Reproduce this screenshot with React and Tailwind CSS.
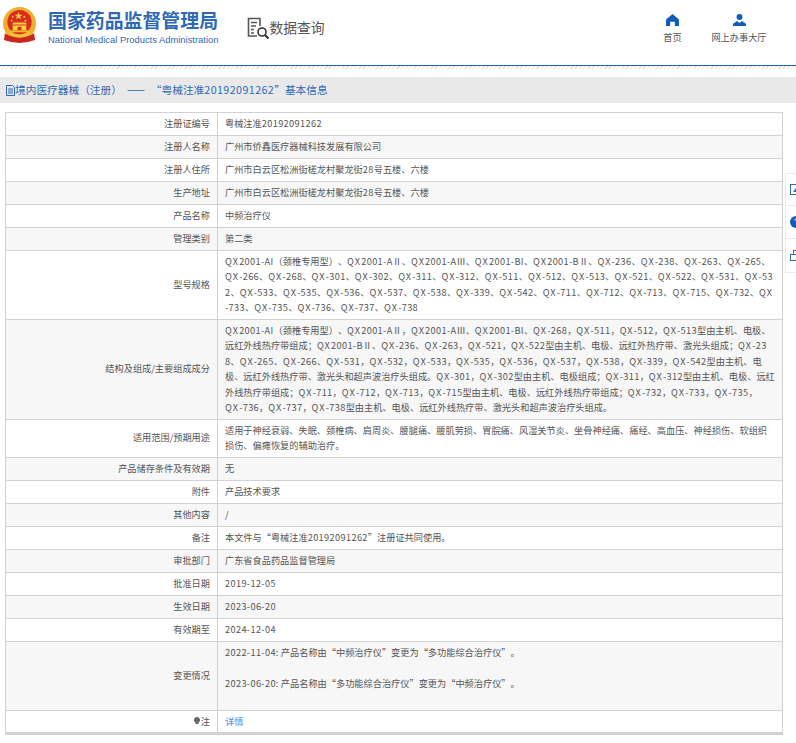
const rows = [
  ['注册证编号', '粤械注准20192091262'],
  ['注册人名称', '广州市侨鑫医疗器械科技发展有限公司'],
  ['注册人住所', '广州市白云区松洲街槎龙村聚龙街28号五楼、六楼'],
  ['生产地址', '广州市白云区松洲街槎龙村聚龙街28号五楼、六楼'],
  ['产品名称', '中频治疗仪'],
  ['管理类别', '第二类'],
  ['型号规格', 'QX2001-AI（颈椎专用型）、QX2001-AⅡ、QX2001-AⅢ、QX2001-BI、QX2001-BⅡ、QX-236、QX-238、QX-263、QX-265、QX-266、QX-268、QX-301、QX-302、QX-311、QX-312、QX-511、QX-512、QX-513、QX-521、QX-522、QX-531、QX-532、QX-533、QX-535、QX-536、QX-537、QX-538、QX-339、QX-542、QX-711、QX-712、QX-713、QX-715、QX-732、QX-733、QX-735、QX-736、QX-737、QX-738'],
  ['结构及组成/主要组成成分', 'QX2001-AI（颈椎专用型）、QX2001-AⅡ，QX2001-AⅢ、QX2001-BI、QX-268，QX-511，QX-512，QX-513型由主机、电极、远红外线热疗带组成；QX2001-BⅡ、QX-236、QX-263，QX-521，QX-522型由主机、电极、远红外热疗带、激光头组成；QX-238、QX-265、QX-266、QX-531，QX-532，QX-533，QX-535，QX-536，QX-537，QX-538，QX-339，QX-542型由主机、电极、远红外线热疗带、激光头和超声波治疗头组成。QX-301，QX-302型由主机、电极组成；QX-311，QX-312型由主机、电极、远红外线热疗带组成；QX-711，QX-712，QX-713，QX-715型由主机、电极、远红外线热疗带组成；QX-732，QX-733，QX-735，\nQX-736，QX-737，QX-738型由主机、电极、远红外线热疗带、激光头和超声波治疗头组成。'],
  ['适用范围/预期用途', '适用于神经衰弱、失眠、颈椎病、肩周炎、腰腿痛、腰肌劳损、胃脘痛、风湿关节炎、坐骨神经痛、痛经、高血压、神经损伤、软组织损伤、偏瘫恢复的辅助治疗。'],
  ['产品储存条件及有效期', '无'],
  ['附件', '产品技术要求'],
  ['其他内容', '/'],
  ['备注', '本文件与“粤械注准20192091262”注册证共同使用。'],
  ['审批部门', '广东省食品药品监督管理局'],
  ['批准日期', '2019-12-05'],
  ['生效日期', '2023-06-20'],
  ['有效期至', '2024-12-04'],
]

// latin runs sit wider than the CJK font's own glyphs, the QX prefix most of all
function Txt({ children }) {
  return children.split(/(QX|[\x21-\x7e]+)/).map((part, i) => {
    if (i % 2 === 0) return part
    return <span key={i} className={part === 'QX' ? 'tracking-[.12em]' : 'tracking-[.04em]'}>{part}</span>
  })
}

function Emblem() {
  return (
    <svg viewBox="0 0 36 38" className="w-[35px] h-[37px] shrink-0">
      <circle cx="18" cy="17" r="17" fill="#eeb02c" />
      <circle cx="18" cy="15.5" r="12.5" fill="#dc2a1e" />
      <polygon points="17,5 18,8 21,8 18.6,9.8 19.5,12.6 17,11 14.5,12.6 15.4,9.8 13,8 16,8" fill="#f8d53e" />
      <circle cx="11" cy="10" r="1" fill="#f8d53e" />
      <circle cx="23" cy="10" r="1" fill="#f8d53e" />
      <circle cx="10" cy="14" r="1" fill="#f8d53e" />
      <circle cx="24" cy="14" r="1" fill="#f8d53e" />
      <path d="M12 16h12l2 2H10z" fill="#f8d53e" />
      <rect x="11" y="19" width="14" height="5" fill="#f8d53e" />
      <rect x="16" y="20.5" width="4" height="3.5" fill="#dc2a1e" />
      <rect x="7" y="24" width="22" height="2" fill="#f0b62f" />
      <path d="M3 27 Q18 36 33 27 L34 34 Q18 40 2 34 Z" fill="#c9281e" />
      <path d="M7 27 Q18 33 29 27" stroke="#f3c53a" strokeWidth="2.5" fill="none" />
    </svg>
  )
}

function Row({ label, children, striped }) {
  return (
    <div className={`flex border-b border-[#d2d2d2] ${striped ? 'bg-[#f7f7f7]' : 'bg-white'}`}>
      <div className="w-[212px] shrink-0 flex items-center justify-end pr-[7px] border-r border-[#d2d2d2]">{label}</div>
      <div className="flex-1 min-w-0 px-[7px] py-[3.325px] leading-[15.35px] break-all whitespace-pre-line">{children}</div>
    </div>
  )
}

export default function App() {
  return (
    <div className="relative w-[796px] h-[743px] overflow-hidden bg-white text-[#555] text-[9.2px] [text-spacing-trim:space-all] font-['Noto_Sans_CJK_SC','Open_Sans',sans-serif]">
      <header className="h-[66px] flex items-start border-b-[1.5px] border-[#1d5fb0]">
        <div className="flex items-center pl-[2px] pt-[7px]"><Emblem /></div>
        <div className="ml-[11px] pt-[8px]">
          <div className="text-[18.9px] leading-[24px] font-bold text-[#2f69b4] whitespace-nowrap">国家药品监督管理局</div>
          <div className="text-[9.4px] leading-[12px] mt-[2px] text-[#2f69b4] font-['Liberation_Sans',sans-serif] whitespace-nowrap">National Medical Products Administration</div>
        </div>
        <div className="ml-[29px] mt-[17px] flex items-start">
          <svg viewBox="0 0 22 22" className="w-[22px] h-[22px]" fill="none" stroke="#555" strokeWidth="1.6">
            <path d="M10 19H1.500V1.500H13V9M4 5.500h6M4 9h5M4 12.500h3M4 16h3" />
            <circle cx="15" cy="15" r="4" stroke="#333" />
            <path d="M18 18l3.500 3.500" stroke="#333" strokeWidth="2.200" />
          </svg>
          <span className="text-[13.8px] leading-[20px] text-[#555] whitespace-nowrap">数据查询</span>
        </div>
        <div className="ml-auto flex pt-[14px] pr-[27px]">
          <div className="flex flex-col items-center w-[67px]">
            <svg viewBox="0 0 14 13" className="w-[13px] h-[12px]" fill="#0f5cbf"><path d="M7 0L0 6v7h4.500V8.500h5V13H14V6z" /></svg>
            <span className="mt-[4px] leading-[14px]">首页</span>
          </div>
          <div className="flex flex-col items-center w-[60px] ml-[3px]">
            <svg viewBox="0 0 14 13" className="w-[13px] h-[12px]" fill="#0f5cbf"><circle cx="7" cy="3.200" r="3.200" /><path d="M0 13V10.500L4.500 7.500 6.500 9.500h1L9.500 7.500 14 10.500V13z" /></svg>
            <span className="mt-[4px] leading-[14px] whitespace-nowrap">网上办事大厅</span>
          </div>
        </div>
      </header>
      <div className="h-[3px] bg-[repeating-linear-gradient(135deg,#e4e4e4_0,#e4e4e4_1px,#fff_1px,#fff_3px)]" />
      <div className="mt-[8px] h-[26px] bg-[#e9e9e9] flex items-center pl-[6px] text-[#2f69b4] text-[10.7px] whitespace-nowrap">
        <svg viewBox="0 0 9 11" className="w-[9px] h-[11px] shrink-0" fill="none" stroke="#2f69b4"><path d="M.5.5h6l2 2v8h-8zM2 4h5M2 6h5M2 8h5" /></svg>
        <span>境内医疗器械（注册）<span className="ml-[5px] mr-[6px]">——</span><Txt>“粤械注准20192091262”基本信息</Txt></span>
      </div>
      <div className="mt-[9px] ml-[5px] w-[778px] border-x border-t border-b-2 border-[#d2d2d2]">
        {rows.map((r, i) => (
          <Row key={r[0]} label={r[0]} striped={i % 2 === 1}><Txt>{r[1]}</Txt></Row>
        ))}
        <Row label="变更情况" striped>
          <div className="pb-[15.3px]">
            <p><Txt>2022-11-04: 产品名称由“中频治疗仪”变更为“多功能综合治疗仪”。</Txt></p>
            <p className="mt-[15.35px]"><Txt>2023-06-20: 产品名称由“多功能综合治疗仪”变更为“中频治疗仪”。</Txt></p>
          </div>
        </Row>
        <Row label={
          <span className="flex items-center">
            <svg viewBox="0 0 6 8" className="w-[6px] h-[8px] mr-[1px]" fill="#666"><path d="M3 0a3 3 0 0 0-1.500 5.600V7h3V5.600A3 3 0 0 0 3 0z" /></svg>注
          </span>
        }>
          <a className="text-[#4a90e2]">详情</a>
        </Row>
      </div>
      <div className="absolute left-[785px] top-[173px] w-[40px] bg-white border border-[#eaeaea] divide-y divide-[#eaeaea]">
        <div className="h-[32px] pl-[4px] flex items-center">
          <svg viewBox="0 0 12 11" className="w-[12px] h-[11px]" fill="none" stroke="#2f69b4"><rect x=".5" y=".5" width="11" height="10" /><path d="M3 8l3-4 3 4z" fill="#2f69b4" stroke="none" /></svg>
        </div>
        <div className="h-[33px] pl-[4px] flex items-center">
          <svg viewBox="0 0 12 12" className="w-[12px] h-[12px]"><circle cx="6" cy="6" r="6" fill="#0f5cbf" /><path d="M4.500 4.500a1.500 1.500 0 1 1 2 1.500v1.500M6.500 9v1" stroke="#fff" fill="none" /></svg>
        </div>
        <div className="h-[33px] pl-[4px] flex items-center">
          <svg viewBox="0 0 12 11" className="w-[12px] h-[11px]" fill="none" stroke="#2f69b4"><rect x="3.500" y=".5" width="7" height="6" /><rect x=".5" y="4.500" width="7" height="6" fill="#fff" /></svg>
        </div>
      </div>
    </div>
  )
}
